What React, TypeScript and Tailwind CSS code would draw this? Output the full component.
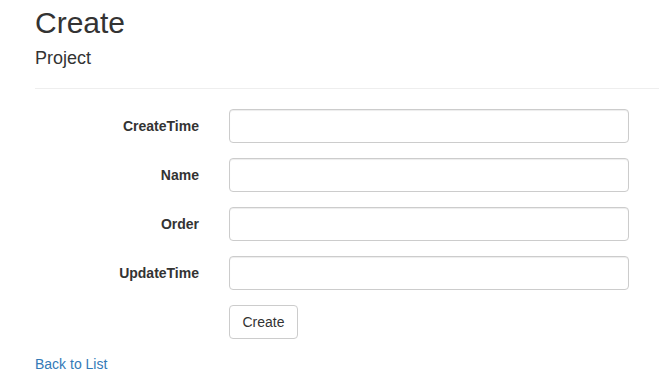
import React from 'react';

const fields = ['CreateTime', 'Name', 'Order', 'UpdateTime'];

const App = () => {
  return (
    <div className="min-h-screen bg-white pl-[35px] text-[14px] leading-[20px] text-[#333] overflow-hidden" style={{ fontFamily: '"Liberation Sans", Arial, sans-serif' }}>
      <h2 className="pt-[6px] text-[30px] leading-[33px] font-normal">Create</h2>
      <h4 className="mt-[9px] text-[18px] leading-[20px] font-normal">Project</h4>
      <hr className="mt-[20px] border-t border-[#eee]" />

      <form className="mt-[20px] flex flex-col gap-[15px]">
        {fields.map((f) => (
          <div key={f} className="flex items-center">
            <label className="w-[164px] text-right font-bold">{f}</label>
            <input type="text" className="ml-[30px] h-[34px] w-[400px] rounded-[4px] border border-[#ccc] px-3 shadow-[inset_0_1px_1px_rgba(0,0,0,0.075)] outline-none" />
          </div>
        ))}
        <div className="flex">
          <button type="button" className="ml-[194px] h-[34px] w-[69px] rounded-[4px] border border-[#ccc] bg-white text-[#333]">
            Create
          </button>
        </div>
      </form>

      <div className="mt-[15px]">
        <a href="#" className="text-[#337ab7]">Back to List</a>
      </div>
    </div>
  );
};

export default App;
